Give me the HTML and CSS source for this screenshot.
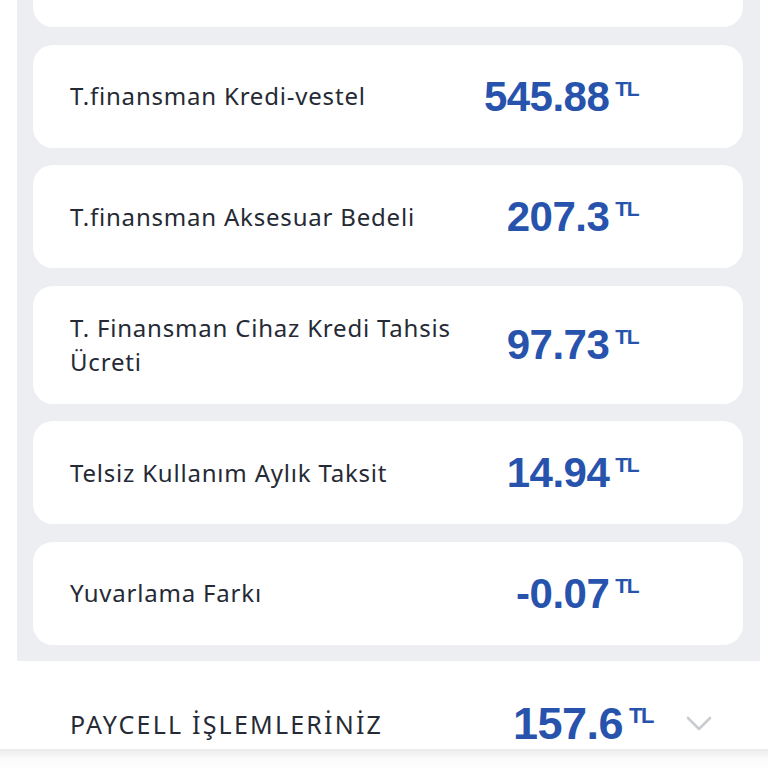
FILE: index.html
```html
<!DOCTYPE html>
<html lang="tr">
<head>
  <meta charset="UTF-8" />
  <title>Fatura Detayı</title>
  <meta name="viewport" content="width=device-width, initial-scale=1" />
  <link rel="stylesheet" href="styles.css">
</head>
<body>
  <div class="panel">
    <div class="card card-cut"></div>

    <div class="card">
      <div class="label">T.finansman Kredi-vestel</div>
      <div class="amount"><span class="num">545.88</span><span class="cur">TL</span></div>
    </div>

    <div class="card">
      <div class="label">T.finansman Aksesuar Bedeli</div>
      <div class="amount"><span class="num">207.3</span><span class="cur">TL</span></div>
    </div>

    <div class="card">
      <div class="label">T. Finansman Cihaz Kredi Tahsis Ücreti</div>
      <div class="amount"><span class="num">97.73</span><span class="cur">TL</span></div>
    </div>

    <div class="card">
      <div class="label">Telsiz Kullanım Aylık Taksit</div>
      <div class="amount"><span class="num">14.94</span><span class="cur">TL</span></div>
    </div>

    <div class="card">
      <div class="label">Yuvarlama Farkı</div>
      <div class="amount"><span class="num">-0.07</span><span class="cur">TL</span></div>
    </div>
  </div>

  <div class="section-row">
    <div class="section-title">PAYCELL İŞLEMLERİNİZ</div>
    <div class="amount big"><span class="num">157.6</span><span class="cur">TL</span></div>
    <svg class="chevron" width="26" height="16" viewBox="0 0 26 16">
      <path d="M2 2 L13 13 L24 2" fill="none" stroke="#c9ccd1" stroke-width="2.6" stroke-linecap="round" stroke-linejoin="round" />
    </svg>
  </div>

  <div class="bottom-fade"></div>
</body>
</html>
```

FILE: styles.css
```css
body {
  margin: 0;
  background: #ffffff;
  font-family: 'Noto Sans', 'Lato', sans-serif;
  color: #252a35;
  overflow: hidden;
}
.panel {
  margin: 0 8px 0 17px;
  padding: 0 17px 16px 16px;
  background: #eceef2;
  display: flex;
  flex-direction: column;
  gap: 17.5px;
}
.card {
  background: #ffffff;
  border-radius: 20px;
  display: flex;
  align-items: center;
  padding: 25px 0 25px 37px;
}
.card-cut {
  height: 27px;
  padding: 0;
  border-radius: 0 0 20px 20px;
}
.label {
  flex: 1;
  font-size: 24px;
  line-height: 34px;
  letter-spacing: 0.8px;
  padding-right: 8px;
}
.amount {
  width: 160px;
  margin-right: 104px;
  display: flex;
  justify-content: flex-end;
  align-items: flex-start;
  color: #2753ad;
  font-family: 'Liberation Sans', sans-serif;
  font-weight: bold;
}
.num {
  font-size: 42px;
  line-height: 53px;
  letter-spacing: -0.5px;
}
.cur {
  font-size: 21px;
  line-height: 1;
  letter-spacing: -1.5px;
  margin-top: 8px;
  margin-left: 6px;
  padding-right: 1px;
}
.section-row {
  display: flex;
  align-items: center;
  padding: 38px 0 0 70px;
}
.section-title {
  flex: 1;
  font-size: 25px;
  letter-spacing: 2.2px;
  color: #252a35;
}
.amount.big {
  width: auto;
  margin-right: 0;
}
.amount.big .num {
  font-size: 45px;
  line-height: 50px;
}
.amount.big .cur {
  font-size: 22px;
  margin-top: 6px;
}
.chevron {
  margin: 0 56px 0 32px;
}
.bottom-fade {
  height: 24px;
  background: linear-gradient(to bottom, #ebebed, #fbfbfb 40%, #ffffff);
}
```
